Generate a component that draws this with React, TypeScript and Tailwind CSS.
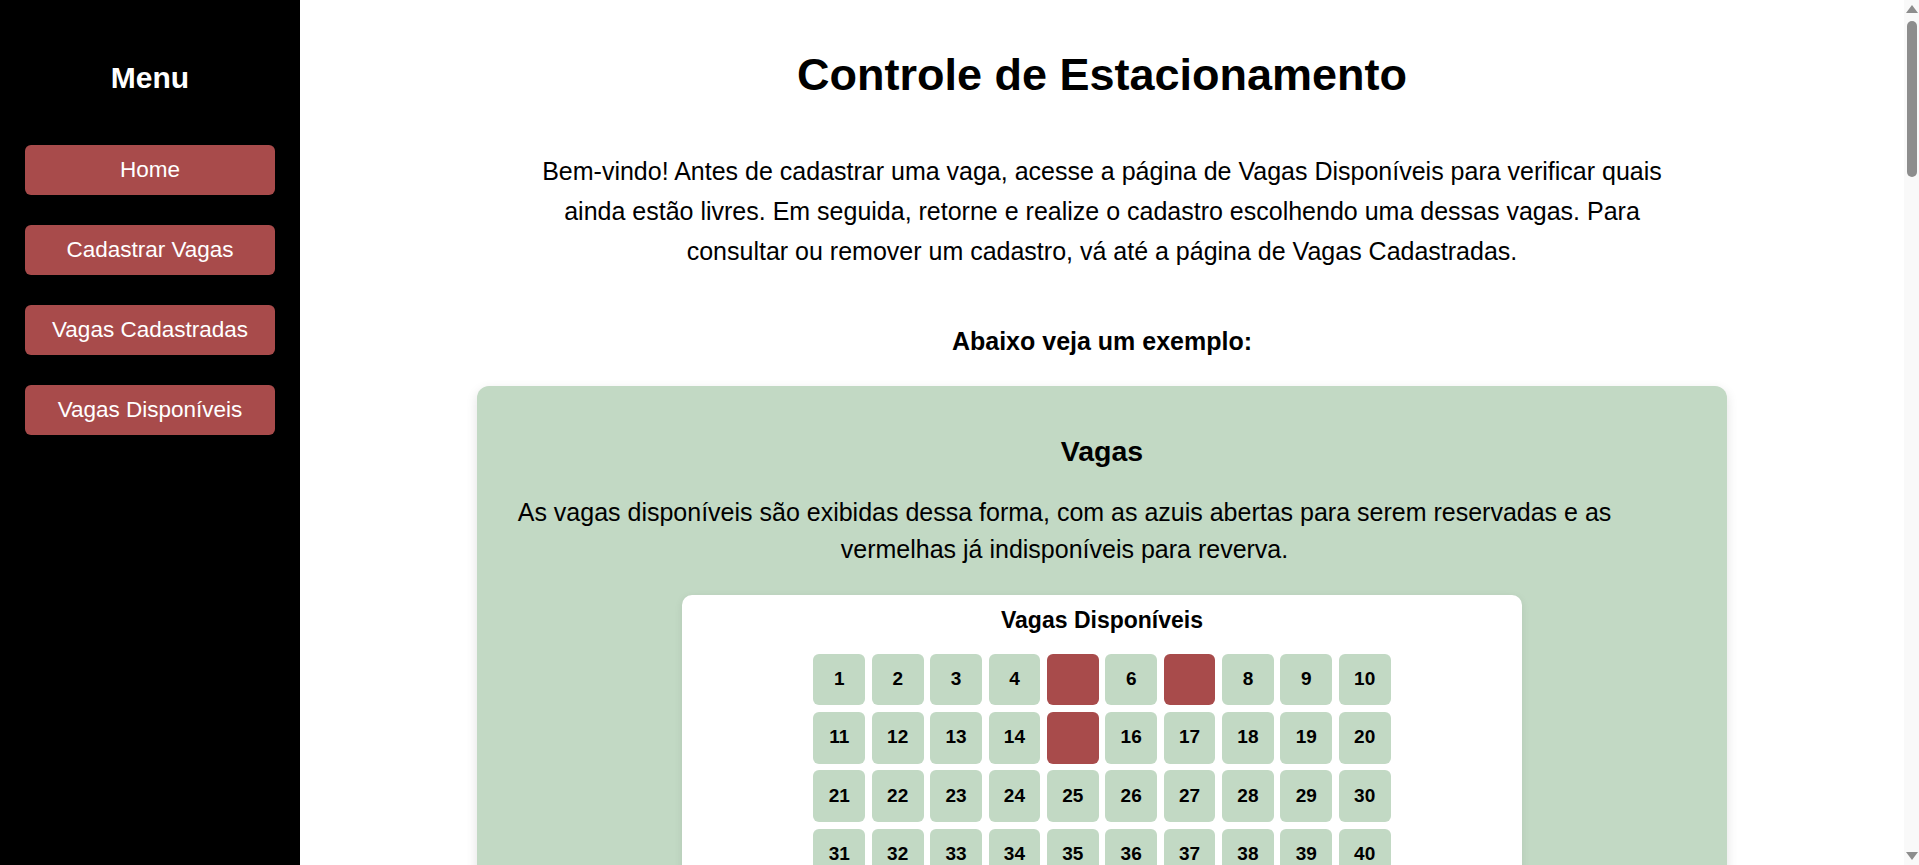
import React from "react";

const menuItems = ["Home", "Cadastrar Vagas", "Vagas Cadastradas", "Vagas Disponíveis"];

// vagas ocupadas no exemplo
const ocupadas = [5, 7, 15];
const vagas = Array.from({ length: 100 }, (_, i) => i + 1);

function Sidebar() {
  return (
    <aside className="w-[300px] shrink-0 bg-black pt-[60px]">
      <h2 className="text-center text-[30px] leading-[35px] font-bold text-white">Menu</h2>
      <nav className="mt-[50px] flex flex-col gap-[30px] px-[25px]">
        {menuItems.map((item) => (
          <a
            key={item}
            href="#"
            className="flex h-[50px] items-center justify-center rounded-[6px] bg-[#a84b4b] text-[22.5px] text-white"
          >
            {item}
          </a>
        ))}
      </nav>
    </aside>
  );
}

function Scrollbar() {
  return (
    <div className="sticky top-0 flex h-screen w-[15px] shrink-0 flex-col items-center justify-between bg-[#f9f9f9] py-[5px]">
      <div className="flex flex-col items-center">
        <svg width="12" height="8" viewBox="0 0 12 8">
          <path d="M6 0 L12 8 L0 8 Z" fill="#8d8d8d" />
        </svg>
        <div className="mt-[8px] h-[156px] w-[10px] rounded-full bg-[#8d8d8d]" />
      </div>
      <svg width="12" height="8" viewBox="0 0 12 8">
        <path d="M0 0 L12 0 L6 8 Z" fill="#8d8d8d" />
      </svg>
    </div>
  );
}

function VagasGrid() {
  return (
    <div className="mx-auto mt-[19.5px] grid w-fit grid-cols-[repeat(10,51.7px)] gap-[6.7px] pb-[12px]">
      {vagas.map((n) => {
        const ocupada = ocupadas.includes(n);
        return (
          <div
            key={n}
            className={
              ocupada
                ? "h-[51.7px] rounded-[6px] bg-[#a84b4b]"
                : "flex h-[51.7px] items-center justify-center rounded-[6px] bg-[#c2d9c4] text-[19px] font-bold text-black"
            }
          >
            {ocupada ? "" : n}
          </div>
        );
      })}
    </div>
  );
}

export default function App() {
  return (
    <div className="flex min-h-screen bg-white font-['Liberation_Sans',Arial,sans-serif] text-black">
      <Sidebar />
      <main className="flex-1 pt-[49px] pb-[60px]">
        <h1 className="text-center text-[45px] leading-[52px] font-bold">Controle de Estacionamento</h1>
        <p className="mx-auto mt-[50px] max-w-[1130px] text-center text-[25px] leading-[40px]">
          Bem-vindo! Antes de cadastrar uma vaga, acesse a página de Vagas Disponíveis para verificar quais ainda
          estão livres. Em seguida, retorne e realize o cadastro escolhendo uma dessas vagas. Para consultar ou
          remover um cadastro, vá até a página de Vagas Cadastradas.
        </p>
        <p className="mt-[50px] text-center text-[25px] leading-[40px] font-bold">Abaixo veja um exemplo:</p>

        <section className="mx-auto mt-[25px] w-[1250px] rounded-[12px] bg-[#c2d9c4] px-[37.5px] pt-[49px] pb-[37.5px] shadow-[0_4px_12px_rgba(0,0,0,0.12)]">
          <h2 className="text-center text-[28.5px] leading-[33px] font-bold">Vagas</h2>
          <p className="mt-[26px] max-w-[1100px] text-center text-[25px] leading-[37px]">
            As vagas disponíveis são exibidas dessa forma, com as azuis abertas para serem reservadas e as
            vermelhas já indisponíveis para reverva.
          </p>
          <div className="mx-auto mt-[26.5px] w-[840px] rounded-[10px] bg-white px-[12px] pt-[12.5px] shadow-[0_2px_8px_rgba(0,0,0,0.08)]">
            <h3 className="text-center text-[23px] leading-[27px] font-bold">Vagas Disponíveis</h3>
            <VagasGrid />
          </div>
        </section>
      </main>
      <Scrollbar />
    </div>
  );
}
